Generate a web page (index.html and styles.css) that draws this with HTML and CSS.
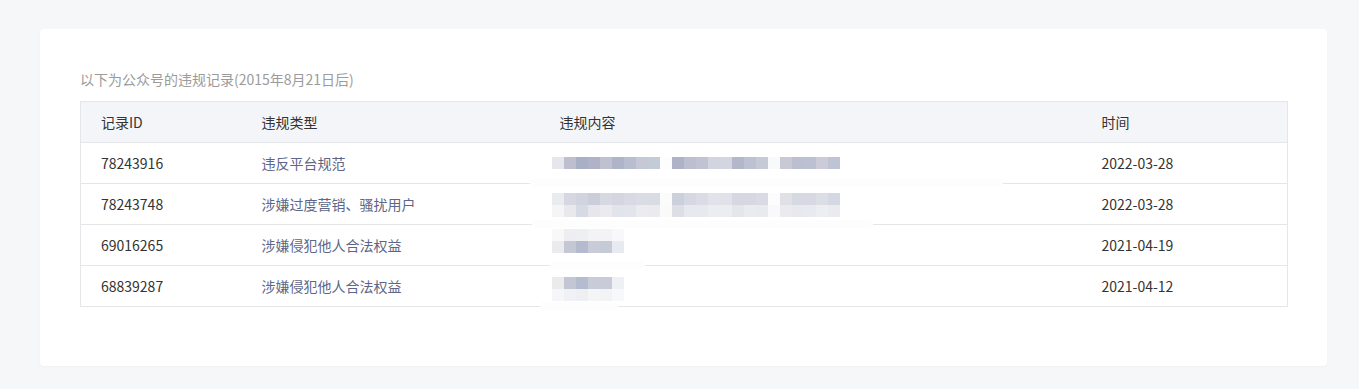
FILE: index.html
```html
<!DOCTYPE html>
<html lang="zh-CN">
<head>
<meta charset="utf-8">
<title>违规记录</title>
<link rel="stylesheet" href="styles.css">
</head>
<body>
<div class="card">
  <p class="caption">以下为公众号的违规记录(2015年8月21日后)</p>
  <table class="records">
    <colgroup>
      <col class="c-id"><col class="c-type"><col class="c-content"><col class="c-time">
    </colgroup>
    <thead>
      <tr><th>记录ID</th><th>违规类型</th><th>违规内容</th><th>时间</th></tr>
    </thead>
    <tbody>
      <tr>
        <td>78243916</td>
        <td class="type">违反平台规范</td>
        <td class="content">
          <div class="mosaic m1">
            <div class="mrow">
              <i style="background:#e6e7ec"></i><i style="background:#bdbfcf"></i><i style="background:#a8b0c5"></i><i style="background:#b0b3c7"></i><i style="background:#bfc0d0"></i><i style="background:#b0b4c8"></i><i style="background:#b8bdd0"></i><i style="background:#c6c8d6"></i><i style="background:#c4cbd8"></i><i style="background:#fdfdfe"></i>
              <i style="background:#b0b3c8"></i><i style="background:#bbbfd0"></i><i style="background:#c1c3d3"></i><i style="background:#d2d5df"></i><i style="background:#d3d5e0"></i><i style="background:#b4b7c9"></i><i style="background:#bcc2d2"></i><i style="background:#c6c9d6"></i><i style="background:#f8f9fb"></i>
              <i style="background:#c8c9d5"></i><i style="background:#bbbfd0"></i><i style="background:#bcc0d3"></i><i style="background:#cbccd8"></i><i style="background:#bec4d4"></i>
            </div>
          </div>
          <span class="smudge s1"></span>
        </td>
        <td>2022-03-28</td>
      </tr>
      <tr>
        <td>78243748</td>
        <td class="type">涉嫌过度营销、骚扰用户</td>
        <td class="content">
          <div class="mosaic m2">
            <div class="mrow">
              <i style="background:#eaebef"></i><i style="background:#d5d8e2"></i><i style="background:#cfd4df"></i><i style="background:#cbcdd9"></i><i style="background:#d6d8e2"></i><i style="background:#d3d6e0"></i><i style="background:#d7d9e3"></i><i style="background:#d9dbe5"></i><i style="background:#d9dce5"></i><i style="background:#fbfbfc"></i>
              <i style="background:#ccd0dc"></i><i style="background:#d5d8e2"></i><i style="background:#d9dce4"></i><i style="background:#e1e3ea"></i><i style="background:#e1e2e9"></i><i style="background:#d5d8e2"></i><i style="background:#d5d8e2"></i><i style="background:#d9dbe4"></i><i style="background:#fcfcfd"></i>
              <i style="background:#e0e1e7"></i><i style="background:#d6d8e2"></i><i style="background:#d6d8e2"></i><i style="background:#dcdee6"></i><i style="background:#d4d8e2"></i>
            </div>
            <div class="mrow">
              <i style="background:#f4f5f7"></i><i style="background:#e8e8ed"></i><i style="background:#d5dae4"></i><i style="background:#e6e7ed"></i><i style="background:#ebebef"></i><i style="background:#e2e4eb"></i><i style="background:#e2e5ec"></i><i style="background:#ebecf0"></i><i style="background:#eaeaef"></i><i style="background:#fafafb"></i>
              <i style="background:#dcdfe6"></i><i style="background:#e8e9ee"></i><i style="background:#e8e9ee"></i><i style="background:#ecedf1"></i><i style="background:#ecedf1"></i><i style="background:#e5e6ea"></i><i style="background:#eaebef"></i><i style="background:#e9eaee"></i><i style="background:#f9f9fb"></i>
              <i style="background:#ebebef"></i><i style="background:#e8e9ee"></i><i style="background:#e9eaef"></i><i style="background:#edeef2"></i><i style="background:#eaebef"></i>
            </div>
          </div>
          <span class="smudge s2"></span>
        </td>
        <td>2022-03-28</td>
      </tr>
      <tr>
        <td>69016265</td>
        <td class="type">涉嫌侵犯他人合法权益</td>
        <td class="content">
          <div class="mosaic m3">
            <div class="mrow">
              <i style="background:#f8f8f9"></i><i style="background:#eeeef2"></i><i style="background:#eeeff3"></i><i style="background:#f3f3f5"></i><i style="background:#f2f3f5"></i><i style="background:#f8f8fa"></i>
            </div>
            <div class="mrow">
              <i style="background:#ebebee"></i><i style="background:#c4c8d5"></i><i style="background:#b4bbcf"></i><i style="background:#c9ccd8"></i><i style="background:#c6c9d6"></i><i style="background:#e8eaf2"></i>
            </div>
          </div>
          <span class="smudge s3"></span>
        </td>
        <td>2021-04-19</td>
      </tr>
      <tr>
        <td>68839287</td>
        <td class="type">涉嫌侵犯他人合法权益</td>
        <td class="content">
          <div class="mosaic m4">
            <div class="mrow">
              <i style="background:#ebebee"></i><i style="background:#c2c6d5"></i><i style="background:#b4bdd0"></i><i style="background:#c8cbd8"></i><i style="background:#c9ccd8"></i><i style="background:#eef0f5"></i>
            </div>
            <div class="mrow">
              <i style="background:#f6f6f8"></i><i style="background:#f0f1f5"></i><i style="background:#eeeff3"></i><i style="background:#f5f5f7"></i><i style="background:#f2f3f5"></i><i style="background:#f7f8fa"></i>
            </div>
          </div>
          <span class="smudge s4"></span>
        </td>
        <td>2021-04-12</td>
      </tr>
    </tbody>
  </table>
</div>
</body>
</html>
```

FILE: styles.css
```css
* { box-sizing: border-box; }

html, body {
  margin: 0;
  background: #f6f7f9;
}

body {
  padding: 29px 32px 23px 40px;
  font-family: "Noto Sans CJK SC", "Noto Sans", sans-serif;
  font-size: 14px;
  color: #333;
}

.card {
  background: #fff;
  border-radius: 4px;
  box-shadow: 0 1px 3px rgba(0, 0, 0, 0.03);
  padding: 40px 40px 59px 40px;
}

.caption {
  margin: 0 0 12px;
  line-height: 20px;
  color: #9b9b9b;
}

.records {
  width: 100%;
  table-layout: fixed;
  border-collapse: collapse;
  border: 1px solid #e5e6ea;
}

.c-id { width: 161px; }
.c-type { width: 298px; }
.c-content { width: 542px; }
.c-time { width: 206px; }

.records th,
.records td {
  height: 41px;
  padding: 0 20px;
  text-align: left;
  vertical-align: middle;
  border-bottom: 1px solid #e5e6ea;
  line-height: 20px;
  font-weight: 400;
  white-space: nowrap;
}

.records th {
  background: #f4f5f8;
  color: #333;
}

.records td.type {
  color: #5d6687;
}

.records td.content {
  position: relative;
  vertical-align: top;
  padding-left: 12px;
}

.mosaic {
  display: flex;
  flex-direction: column;
}

.mrow {
  display: flex;
}

.mrow i {
  display: block;
  width: 12px;
  height: 12px;
}

.m1 { margin-top: 14px; }
.m2 { margin-top: 9px; }
.m3 { margin-top: 4px; }
.m4 { margin-top: 11px; }

.smudge {
  position: absolute;
  bottom: -4px;
  height: 8px;
  background: #fdfdfd;
  border-radius: 4px;
}

.s1 { left: -10px; width: 473px; }
.s2 { left: -8px; width: 341px; }
.s3 { left: 10px; width: 95px; }
.s4 { left: 0; width: 78px; }
```
